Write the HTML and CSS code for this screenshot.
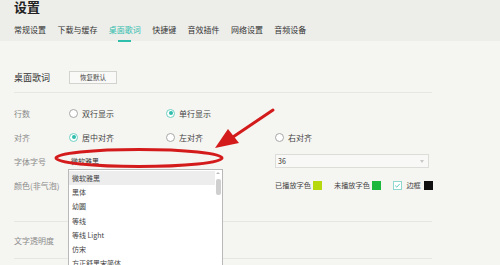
FILE: index.html
```html
<!DOCTYPE html>
<html lang="zh-CN">
<head>
<meta charset="utf-8">
<title>设置</title>
<link rel="stylesheet" href="styles.css">
</head>
<body>
<div class="page">
  <header class="header">
    <div class="title">设置</div>
    <nav class="tabs">
      <span class="tab">常规设置</span>
      <span class="tab">下载与缓存</span>
      <span class="tab active">桌面歌词</span>
      <span class="tab">快捷键</span>
      <span class="tab">音效插件</span>
      <span class="tab">网络设置</span>
      <span class="tab">音频设备</span>
    </nav>
  </header>

  <main class="content">
    <div class="section-head">
      <span class="section-title">桌面歌词</span>
      <span class="btn">恢复默认</span>
    </div>

    <div class="rows">
      <div class="row">
        <span class="label">行数</span>
        <span class="opt c2"><i class="radio"></i>双行显示</span>
        <span class="opt c3"><i class="radio on"></i>单行显示</span>
      </div>
      <div class="row">
        <span class="label">对齐</span>
        <span class="opt c2"><i class="radio on"></i>居中对齐</span>
        <span class="opt c3"><i class="radio"></i>左对齐</span>
        <span class="opt"><i class="radio"></i>右对齐</span>
      </div>
      <div class="row">
        <span class="label">字体字号</span>
        <div class="select-wrap">
          <div class="select font-select">微软雅黑</div>
          <div class="dropdown">
            <div class="item hl">微软雅黑</div>
            <div class="item">黑体</div>
            <div class="item">幼圆</div>
            <div class="item">等线</div>
            <div class="item">等线 Light</div>
            <div class="item">仿宋</div>
            <div class="item">方正舒黑宋简体</div>
            <span class="scroll-up"></span>
            <span class="thumb"></span>
          </div>
        </div>
        <div class="select size-select"><span>36</span><span class="caret"></span></div>
      </div>
      <div class="row">
        <span class="label">颜色(非气泡)</span>
        <div class="colors">
          <span class="ci">已播放字色<span class="sw yg"></span></span>
          <span class="ci">未播放字色<span class="sw gr"></span></span>
          <span class="ci"><span class="check"><svg viewBox="0 0 9 9" width="7" height="7"><path d="M1.5 4.6 L3.6 6.6 L7.4 2.4" fill="none" stroke="#35b9aa" stroke-width="1"/></svg></span>边框<span class="sw bk"></span></span>
        </div>
      </div>
    </div>

    <div class="sep-block">
      <span class="label">文字透明度</span>
    </div>
  </main>

  <svg class="mark" width="500" height="265" viewBox="0 0 500 265">
    <ellipse cx="139" cy="158" rx="83" ry="8.5" fill="none" stroke="#d41b1b" stroke-width="3"/>
    <line x1="273" y1="110" x2="230" y2="139" stroke="#d41b1b" stroke-width="3" stroke-linecap="round"/>
    <polygon points="215,148 228,129 239,143" fill="#d41b1b"/>
  </svg>
</div>
</body>
</html>
```

FILE: styles.css
```css
* { box-sizing: border-box; }

html, body {
  margin: 0;
  padding: 0;
}

body {
  background: #f5f5f1;
  font-family: "Noto Sans CJK SC", "Noto Sans", sans-serif;
  color: #444;
  width: 500px;
  height: 265px;
  overflow: hidden;
}

.page {
  position: relative;
  width: 500px;
  height: 265px;
  overflow: hidden;
}

.header {
  height: 41px;
  background: #ededea;
  padding-left: 14px;
}

.title {
  font-size: 13px;
  line-height: 13px;
  font-weight: bold;
  color: #222;
  height: 13px;
}

.tabs {
  display: flex;
  gap: 11.4px;
  margin-top: 12px;
  white-space: nowrap;
}

.tab {
  font-size: 8px;
  line-height: 10px;
  color: #333;
  display: flex;
  flex-direction: column;
  align-items: center;
}

.tab.active {
  color: #2fbdac;
}

.tab.active::after {
  content: "";
  display: block;
  width: 13px;
  height: 2px;
  background: #2fbdac;
  margin-top: 5px;
}

.content {
  margin-left: 14px;
  width: 418px;
}

.section-head {
  display: flex;
  align-items: center;
  padding-top: 30px;
  padding-bottom: 8px;
  border-bottom: 1px solid #e6e6e2;
}

.section-title {
  width: 55px;
  font-size: 9px;
  line-height: 13px;
  color: #333;
}

.btn {
  width: 48px;
  height: 13px;
  border: 1px solid #d2d2ce;
  background: #f9f9f7;
  font-size: 6.5px;
  line-height: 11px;
  text-align: center;
  color: #444;
}

.rows {
  padding-top: 8px;
}

.row {
  display: flex;
  align-items: center;
  height: 24px;
  white-space: nowrap;
}

.label {
  font-size: 8px;
  color: #8a8a8a;
  white-space: nowrap;
}

.row > .label {
  width: 55px;
  flex: none;
}

.opt {
  display: flex;
  align-items: center;
  gap: 4px;
  font-size: 8px;
  color: #444;
  flex: none;
}

.opt.c2 { width: 97px; }
.opt.c3 { width: 109px; }

.radio {
  width: 9px;
  height: 9px;
  border: 1px solid #a8a8a8;
  border-radius: 50%;
  background: #fff;
  display: flex;
  align-items: center;
  justify-content: center;
  flex: none;
}

.radio.on {
  border-color: #6fd0c4;
}

.radio.on::after {
  content: "";
  width: 4px;
  height: 4px;
  border-radius: 50%;
  background: #2fbdac;
}

.select-wrap {
  position: relative;
  margin-left: -1px;
  width: 154px;
  margin-right: 53px;
  flex: none;
}

.select {
  height: 14px;
  border: 1px solid #dcdcd8;
  background: #f8f8f6;
  font-size: 7px;
  line-height: 12px;
  padding-left: 2px;
  color: #333;
}

.font-select {
  border-color: transparent;
  background: transparent;
}

.size-select {
  width: 154px;
  flex: none;
  display: flex;
  justify-content: space-between;
  align-items: center;
  padding-right: 4px;
}

.caret {
  width: 0;
  height: 0;
  border-left: 2.5px solid transparent;
  border-right: 2.5px solid transparent;
  border-top: 3px solid #c8c8c8;
}

.dropdown {
  position: absolute;
  left: 0;
  top: 15px;
  width: 155px;
  height: 120px;
  padding-top: 1px;
  background: #fff;
  border: 1px solid #b9b9b9;
  z-index: 2;
}

.item {
  height: 14.2px;
  line-height: 14.2px;
  font-size: 7px;
  padding-left: 3px;
  color: #444;
  width: 146px;
}

.item.hl {
  background: #ededed;
}

.scroll-up {
  position: absolute;
  right: 2px;
  top: 2px;
  width: 0;
  height: 0;
  border-left: 2px solid transparent;
  border-right: 2px solid transparent;
  border-bottom: 2px solid #bbb;
}

.thumb {
  position: absolute;
  right: 1px;
  top: 9px;
  width: 5px;
  height: 16px;
  border-radius: 2px;
  background: #cfcfcf;
}

.colors {
  margin-left: 206px;
  display: flex;
  align-items: center;
  gap: 11.5px;
  flex: none;
}

.ci {
  display: flex;
  align-items: center;
  gap: 2.5px;
  font-size: 7.2px;
  color: #444;
  flex: none;
}

.sw {
  width: 9px;
  height: 9px;
  display: block;
  flex: none;
}

.sw.yg { background: #b6d80e; }
.sw.gr { background: #1bb83d; }
.sw.bk { background: #111; margin-left: 1px; }

.check {
  width: 9px;
  height: 9px;
  border: 1px solid #8ed8cf;
  background: #fff;
  display: flex;
  align-items: center;
  justify-content: center;
  margin-right: 2px;
  flex: none;
}

.sep-block {
  margin-top: 24px;
  height: 38px;
  border-top: 1px solid #e6e6e2;
  border-bottom: 1px solid #e6e6e2;
  display: flex;
  align-items: center;
}

.mark {
  position: absolute;
  left: 0;
  top: 0;
  pointer-events: none;
  z-index: 3;
}
```
